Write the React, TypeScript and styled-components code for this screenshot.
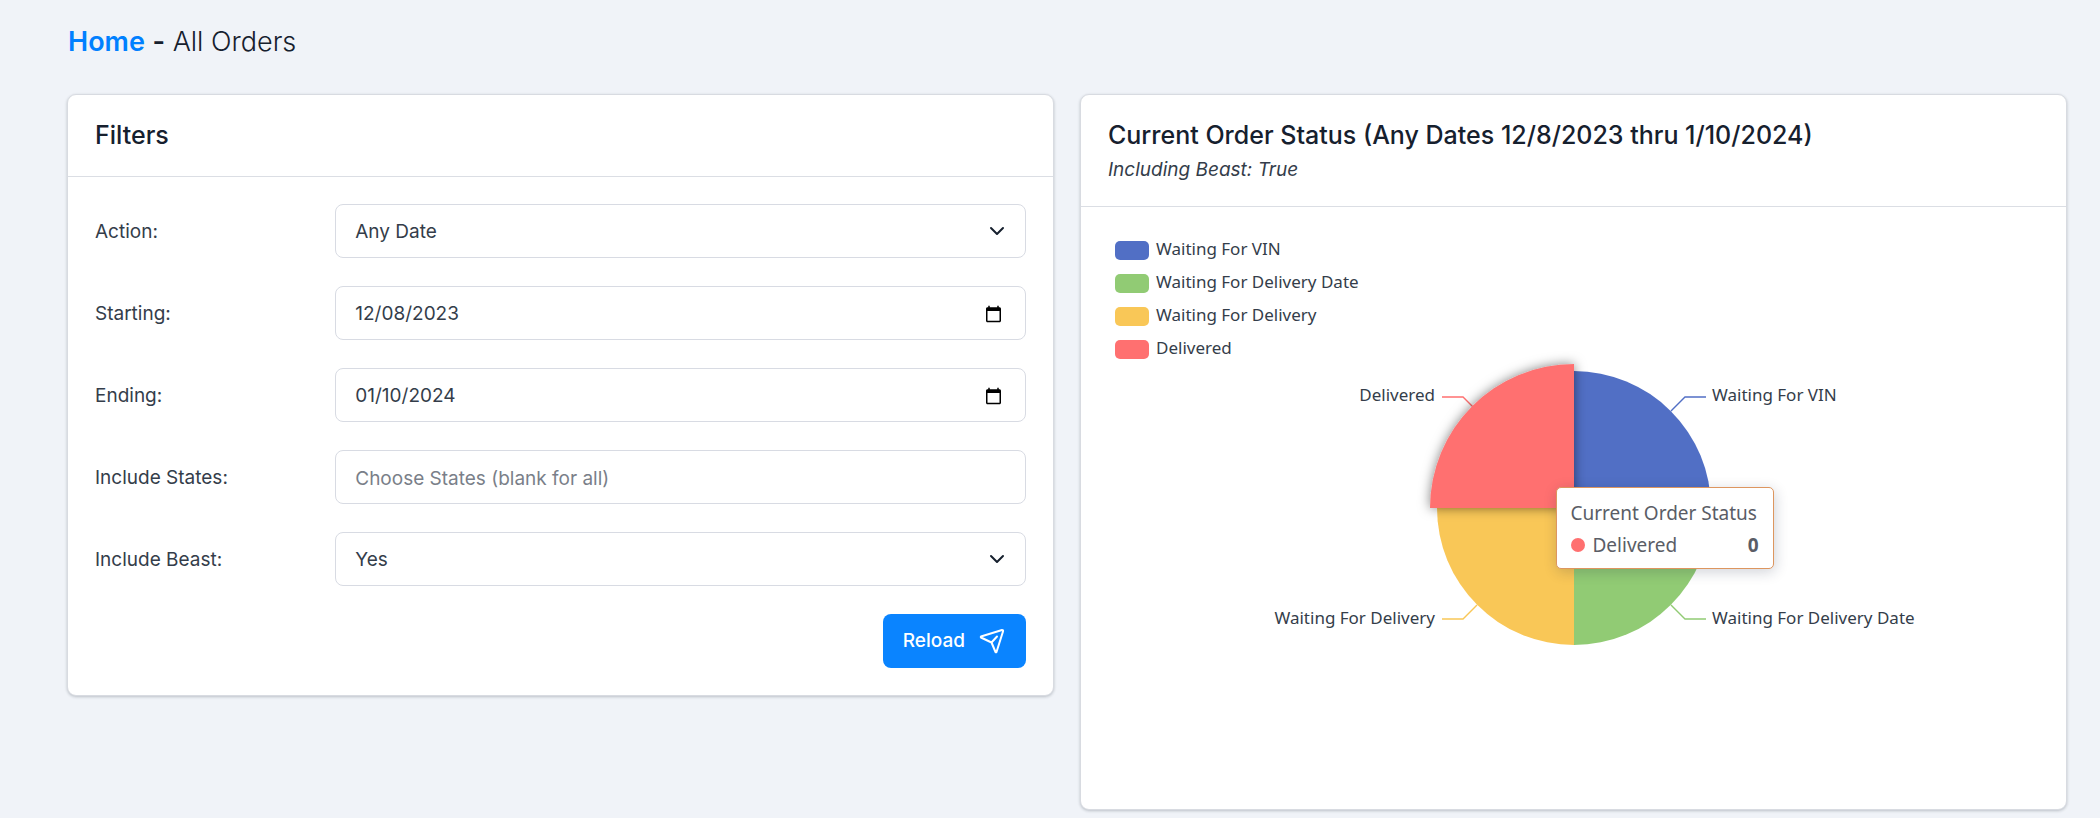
import React from "react";
import styled, { createGlobalStyle } from "styled-components";

const GlobalStyle = createGlobalStyle`
  *, *::before, *::after { box-sizing: border-box; }
  body {
    margin: 0;
    background: #f0f3f8;
    color: #343d4a;
    font-family: Inter, "Liberation Sans", sans-serif;
    font-size: 19px;
    font-weight: 400;
    line-height: 28px;
  }
`;

const CHART_FONT = `"Noto Sans", "Open Sans", sans-serif`;

const Page = styled.main`
  padding: 21px 33px 8px 67px;
`;

const PageTitle = styled.h1`
  margin: 0 0 31px;
  padding-left: 1px;
  color: #16202e;
  font-size: 27px;
  font-weight: 300;
  line-height: 42px;
`;

const HomeLink = styled.a`
  color: #0080ff;
  font-weight: 600;
  text-decoration: none;
`;

const Dash = styled.span`
  font-weight: 600;
`;

const Columns = styled.div`
  display: grid;
  grid-template-columns: 1fr 1fr;
  align-items: start;
  gap: 26px;
`;

const Card = styled.section`
  background: #fff;
  border: 1px solid #d8dbe1;
  border-radius: 9px;
  box-shadow: 0 1px 3px rgba(22, 32, 46, 0.24);
`;

const CardHeader = styled.header`
  padding: 26px 27px;
  border-bottom: 1px solid #dbdee4;
`;

const CardTitle = styled.h2`
  margin: 0;
  color: #16202e;
  font-size: 25px;
  font-weight: 500;
  line-height: 29px;
`;

const CardSubtitle = styled.p`
  margin: 10px 0 0;
  font-style: italic;
  line-height: 20px;
`;

const Form = styled.form`
  display: flex;
  flex-direction: column;
  gap: 28px;
  padding: 27px;
`;

const Field = styled.div`
  display: grid;
  grid-template-columns: 1fr 3fr;
  align-items: center;
  gap: 10px;
`;

const FieldLabel = styled.label`
  padding-top: 2px;
`;

const ControlWrap = styled.div`
  position: relative;
`;

const Control = styled.input`
  display: block;
  width: 100%;
  height: 54px;
  padding: 2px 20px 0 19px;
  border: 1px solid #d8dbe3;
  border-radius: 8px;
  background: #fff;
  color: inherit;
  font: inherit;
  appearance: none;

  &::placeholder {
    color: #7a7f89;
    opacity: 1;
  }

  &::-webkit-datetime-edit-month-field,
  &::-webkit-datetime-edit-day-field,
  &::-webkit-datetime-edit-year-field {
    padding: 0;
  }
`;

const Chevron = styled.svg`
  position: absolute;
  right: 21px;
  top: 19px;
  width: 16px;
  height: 16px;
  pointer-events: none;
`;

const Actions = styled.div`
  display: flex;
  justify-content: flex-end;
`;

const ReloadButton = styled.button`
  display: flex;
  align-items: center;
  gap: 14px;
  height: 54px;
  padding: 0 21px 0 20px;
  border: 0;
  border-radius: 8px;
  background: #0a84ff;
  color: #fff;
  font: inherit;
  font-weight: 500;
`;

const ChartBody = styled.div`
  padding: 28px 27px;
  font-family: ${CHART_FONT};
  font-size: 17px;
`;

const Legend = styled.ul`
  display: flex;
  flex-direction: column;
  gap: 2px;
  margin: 0;
  padding: 0 7px;
  list-style: none;
`;

const LegendItem = styled.li`
  display: flex;
  align-items: center;
  gap: 7px;
  height: 31px;
`;

const LegendText = styled.span`
  padding-bottom: 3px;
`;

const Swatch = styled.span<{ $color: string }>`
  width: 34px;
  height: 19px;
  border-radius: 5px;
  background: ${(p) => p.$color};
`;

const PieArea = styled.div`
  position: relative;
  width: 680px;
  margin: 0 auto;
`;

const PieSvg = styled.svg`
  display: block;
  width: 680px;
  height: 416px;
  overflow: visible;
`;

const Tooltip = styled.div`
  position: absolute;
  left: 322px;
  top: 122px;
  width: 218px;
  height: 82px;
  padding: 9px 14px;
  border: 1px solid #dd965f;
  border-radius: 5px;
  background: #fff;
  box-shadow: 1px 3px 14px rgba(22, 32, 60, 0.2);
  color: #5a5d66;
  font-size: 19px;
  line-height: 32px;
  white-space: nowrap;
`;

const TooltipRow = styled.div`
  display: flex;
  align-items: center;
  gap: 8px;
`;

const Dot = styled.span`
  width: 14px;
  height: 14px;
  border-radius: 50%;
  background: #ff7070;
`;

const TooltipValue = styled.strong`
  margin-left: auto;
  font-weight: 700;
`;

const BLUE = "#516fc5";
const GREEN = "#91cb74";
const YELLOW = "#f9c757";
const RED = "#ff7070";

const legend = [
  { label: "Waiting For VIN", color: BLUE },
  { label: "Waiting For Delivery Date", color: GREEN },
  { label: "Waiting For Delivery", color: YELLOW },
  { label: "Delivered", color: RED },
];

const slices = [
  { color: BLUE, d: "M0 0V-137A137 137 0 0 1 137 0Z" },
  { color: GREEN, d: "M0 0H137A137 137 0 0 1 0 137Z" },
  { color: YELLOW, d: "M0 0V137A137 137 0 0 1 -137 0Z" },
];

const callouts = [
  { label: "Waiting For VIN", color: BLUE, points: "97,-97 111,-111 132,-111", x: 138, y: -107, anchor: "start" },
  { label: "Waiting For Delivery Date", color: GREEN, points: "97,97 111,111 132,111", x: 138, y: 116, anchor: "start" },
  { label: "Waiting For Delivery", color: YELLOW, points: "-97,97 -111,111 -132,111", x: -139, y: 116, anchor: "end" },
  { label: "Delivered", color: RED, points: "-97,-97 -111,-111 -132,-111", x: -139, y: -107, anchor: "end" },
] as const;

function SelectField({ id, label, options }: { id: string; label: string; options: string[] }) {
  return (
    <Field>
      <FieldLabel htmlFor={id}>{label}</FieldLabel>
      <ControlWrap>
        <Control as="select" id={id}>
          {options.map((o) => (
            <option key={o}>{o}</option>
          ))}
        </Control>
        <Chevron viewBox="0 0 16 16" fill="none" stroke="#16202e" strokeWidth="2" strokeLinecap="round" strokeLinejoin="round" aria-hidden="true">
          <path d="M2 5l6 6 6-6" />
        </Chevron>
      </ControlWrap>
    </Field>
  );
}

function InputField({ id, label, ...rest }: { id: string; label: string } & React.InputHTMLAttributes<HTMLInputElement>) {
  return (
    <Field>
      <FieldLabel htmlFor={id}>{label}</FieldLabel>
      <Control id={id} {...rest} />
    </Field>
  );
}

function SendIcon() {
  return (
    <svg width="26" height="26" viewBox="0 0 26 26" fill="none" stroke="currentColor" strokeWidth="2" strokeLinecap="round" strokeLinejoin="round" aria-hidden="true">
      <path d="M2 8.500L23 2Q24.500 2 24 3.500L17.500 24Q17 24.500 16.500 24L12.500 14.500L2 9.500Q1.500 9 2 8.500ZM12.500 14.500L18 8.500" />
    </svg>
  );
}

function StatusChart() {
  return (
    <ChartBody>
      <Legend>
        {legend.map((item) => (
          <LegendItem key={item.label}>
            <Swatch $color={item.color} />
            <LegendText>{item.label}</LegendText>
          </LegendItem>
        ))}
      </Legend>
      <PieArea>
        <PieSvg viewBox="-340 -143 680 416" role="img" aria-label="Current order status">
          <defs>
            <filter id="lift" x="-20%" y="-20%" width="140%" height="140%">
              <feDropShadow dx="0" dy="0" stdDeviation="6" floodColor="#000" floodOpacity="0.5" />
            </filter>
          </defs>
          {slices.map((s) => (
            <path key={s.color} d={s.d} fill={s.color} />
          ))}
          {callouts.map((c) => (
            <g key={c.label}>
              <polyline points={c.points} fill="none" stroke={c.color} strokeWidth="1.4" />
              <text x={c.x} y={c.y} textAnchor={c.anchor} fill="#343d4a">
                {c.label}
              </text>
            </g>
          ))}
          <path d="M0 0H-144A144 144 0 0 1 0 -144Z" fill={RED} filter="url(#lift)" />
        </PieSvg>
        <Tooltip role="tooltip">
          <div>Current Order Status</div>
          <TooltipRow>
            <Dot />
            Delivered
            <TooltipValue>0</TooltipValue>
          </TooltipRow>
        </Tooltip>
      </PieArea>
    </ChartBody>
  );
}

export default function App() {
  return (
    <Page>
      <GlobalStyle />
      <PageTitle>
        <HomeLink href="#home">Home</HomeLink> <Dash>-</Dash> All Orders
      </PageTitle>
      <Columns>
        <Card>
          <CardHeader>
            <CardTitle>Filters</CardTitle>
          </CardHeader>
          <Form>
            <SelectField id="action" label="Action:" options={["Any Date"]} />
            <InputField id="starting" label="Starting:" type="date" defaultValue="2023-12-08" />
            <InputField id="ending" label="Ending:" type="date" defaultValue="2024-01-10" />
            <InputField id="states" label="Include States:" type="text" placeholder="Choose States (blank for all)" />
            <SelectField id="beast" label="Include Beast:" options={["Yes", "No"]} />
            <Actions>
              <ReloadButton type="button">
                Reload
                <SendIcon />
              </ReloadButton>
            </Actions>
          </Form>
        </Card>
        <Card>
          <CardHeader>
            <CardTitle>Current Order Status (Any Dates 12/8/2023 thru 1/10/2024)</CardTitle>
            <CardSubtitle>Including Beast: True</CardSubtitle>
          </CardHeader>
          <StatusChart />
        </Card>
      </Columns>
    </Page>
  );
}
